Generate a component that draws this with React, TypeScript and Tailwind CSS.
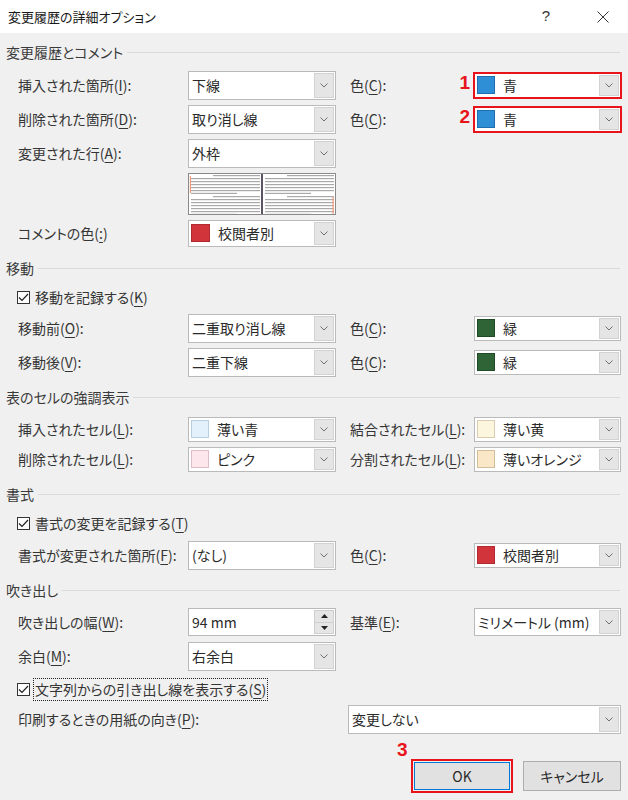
import React from "react";

const U = ({ children }: { children: React.ReactNode }) => (
  <span className="underline underline-offset-[3px] decoration-1">{children}</span>
);

function Chevron() {
  return (
    <svg width="8" height="5" viewBox="0 0 8 5">
      <path d="M0.5 0.5 L4 4 L7.5 0.5" fill="none" stroke="#707070" strokeWidth="1" />
    </svg>
  );
}

function ArrowBtn() {
  return (
    <div className="w-[20px] my-px mr-px shrink-0 bg-[#e5e5e5] border border-[#d2d2d2] flex items-center justify-center">
      <Chevron />
    </div>
  );
}

function Combo({ cls, children }: { cls: string; children: React.ReactNode }) {
  return (
    <div className={`flex shrink-0 bg-white border border-[#bababa] ${cls}`}>
      <div className="flex-1 flex items-center pl-[3px] min-w-0 text-[14px] text-[#2a2a2a] whitespace-nowrap">
        {children}
      </div>
      <ArrowBtn />
    </div>
  );
}

function ColorCombo({ cls, sw, text, noBorder }: { cls: string; sw: string; text: string; noBorder?: boolean }) {
  return (
    <div className={`flex shrink-0 bg-white ${noBorder ? "border border-transparent" : "border border-[#bababa]"} ${cls}`}>
      <div className="flex-1 flex items-center pl-[2px] min-w-0 text-[14px] text-[#2a2a2a] whitespace-nowrap">
        <span className={`w-[18px] h-[18px] border shrink-0 ${sw}`} />
        <span className="ml-[8px]">{text}</span>
      </div>
      <ArrowBtn />
    </div>
  );
}

function Section({ title }: { title: string }) {
  return (
    <div className="flex items-center h-[20px] pl-[6px] pr-[8px]">
      <span className="text-[14px] text-[#3a3a3a] whitespace-nowrap">{title}</span>
      <div className="flex-1 h-px bg-[#dadada] ml-[4px]" />
    </div>
  );
}

function Check({ children, focus }: { children: React.ReactNode; focus?: boolean }) {
  return (
    <div className="flex items-center h-[26px] pl-[17px]">
      <div className="w-[13px] h-[13px] bg-white border border-[#333] flex items-center justify-center shrink-0">
        <svg width="11" height="9" viewBox="0 0 11 9">
          <path d="M1 4.5 L4 7.5 L10 1" fill="none" stroke="#222" strokeWidth="1.2" />
        </svg>
      </div>
      <span
        className={`ml-[3px] text-[14px] text-[#353535] whitespace-nowrap px-px ${
          focus ? "border border-dotted border-[#222]" : "border border-transparent"
        }`}
      >
        {children}
      </span>
    </div>
  );
}

function Label({ children, cls }: { children: React.ReactNode; cls: string }) {
  return <div className={`text-[14px] text-[#353535] whitespace-nowrap shrink-0 ${cls}`}>{children}</div>;
}

function Preview() {
  const lines = (ox: number) => {
    const out: React.ReactNode[] = [];
    const groups = [0, 21];
    groups.forEach((g, gi) => {
      out.push(<rect key={`h${gi}`} x={ox + 24} y={g + 1} width={47} height={1.2} fill="#a9a9a9" />);
      [4, 7, 10, 13, 16].forEach((y, i) =>
        out.push(<rect key={`f${gi}${i}`} x={ox + 2} y={g + y} width={69} height={1.2} fill="#a9a9a9" />)
      );
      out.push(<rect key={`s${gi}`} x={ox + 2} y={g + 18.8} width={46} height={1.2} fill="#a9a9a9" />);
    });
    return out;
  };
  return (
    <div className="ml-[188px] mt-[3px] w-[148px] h-[42px] border border-[#8a8a8a] bg-white">
      <svg width="146" height="40" viewBox="0 0 146 40">
        {lines(0)}
        {lines(74)}
        <rect x={72} y={0} width={2} height={40} fill="#5c5664" />
        <rect x={0.8} y={2} width={1.2} height={17} fill="#f39a7c" />
        <rect x={143.5} y={23} width={1.2} height={17} fill="#f39a7c" />
      </svg>
    </div>
  );
}

function Annot({ n }: { n: string }) {
  return (
    <span className="absolute right-full mr-[4px] top-[0px] font-['Liberation_Sans',Arial,sans-serif] font-bold text-[19px] leading-none text-[#e8141b]">
      {n}
    </span>
  );
}

function RedColor({ n }: { n: string }) {
  return (
    <div className="relative">
      <Annot n={n} />
      <div className="absolute -inset-[1px] border-2 border-[#e8141b] pointer-events-none z-10" />
      <ColorCombo cls="w-[147px] h-[25px]" sw="bg-[#2f8fd6] border-[#1e6eb0]" text="青" noBorder />
    </div>
  );
}

export default function App() {
  return (
    <div className="w-[628px] h-[800px] bg-[#f0f0f0] overflow-hidden font-['Noto_Sans_CJK_JP',sans-serif] [font-feature-settings:'palt'] text-[#2b2b2b]">
      {/* Title bar */}
      <div className="h-[33px] bg-white flex items-center">
        <span className="pl-[8px] text-[13px] text-[#1a1a1a]">変更履歴の詳細オプション</span>
        <span className="ml-auto text-[15px] text-[#333] font-['Liberation_Sans',sans-serif]">?</span>
        <svg className="ml-[47px] mr-[19px]" width="12" height="12" viewBox="0 0 12 12">
          <path d="M0.5 0.5 L11.5 11.5 M11.5 0.5 L0.5 11.5" stroke="#333" strokeWidth="1" />
        </svg>
      </div>

      {/* 変更履歴とコメント */}
      <div className="mt-[9px]">
        <Section title="変更履歴とコメント" />
      </div>
      <div className="mt-[6px] flex items-center h-[34px] pl-[18px]">
        <Label cls="w-[170px]">
          挿入された箇所(<U>I</U>):
        </Label>
        <Combo cls="w-[148px] h-[29px]">下線</Combo>
        <Label cls="w-[124px] ml-[14px]">
          色(<U>C</U>):
        </Label>
        <RedColor n="1" />
      </div>
      <div className="flex items-center h-[34px] pl-[18px]">
        <Label cls="w-[170px]">
          削除された箇所(<U>D</U>):
        </Label>
        <Combo cls="w-[148px] h-[29px]">取り消し線</Combo>
        <Label cls="w-[124px] ml-[14px]">
          色(<U>C</U>):
        </Label>
        <RedColor n="2" />
      </div>
      <div className="flex items-center h-[34px] pl-[18px]">
        <Label cls="w-[170px]">
          変更された行(<U>A</U>):
        </Label>
        <Combo cls="w-[148px] h-[29px]">外枠</Combo>
      </div>
      <Preview />
      <div className="mt-[1px] flex items-center h-[34px] pl-[18px]">
        <Label cls="w-[170px]">
          コメントの色(<U>:</U>)
        </Label>
        <ColorCombo cls="w-[148px] h-[27px]" sw="w-[19px] bg-[#d1343a] border-[#b02a30]" text="校閲者別" />
      </div>

      {/* 移動 */}
      <div className="mt-[8px]">
        <Section title="移動" />
      </div>
      <div className="mt-[6px]">
        <Check>
          移動を記録する(<U>K</U>)
        </Check>
      </div>
      <div className="mt-[1px] flex items-center h-[34px] pl-[18px]">
        <Label cls="w-[170px]">
          移動前(<U>O</U>):
        </Label>
        <Combo cls="w-[148px] h-[29px]">二重取り消し線</Combo>
        <Label cls="w-[124px] ml-[14px]">
          色(<U>C</U>):
        </Label>
        <ColorCombo cls="w-[147px] h-[25px]" sw="bg-[#2e6436] border-[#1f4a26]" text="緑" />
      </div>
      <div className="flex items-center h-[34px] pl-[18px]">
        <Label cls="w-[170px]">
          移動後(<U>V</U>):
        </Label>
        <Combo cls="w-[148px] h-[29px]">二重下線</Combo>
        <Label cls="w-[124px] ml-[14px]">
          色(<U>C</U>):
        </Label>
        <ColorCombo cls="w-[147px] h-[25px]" sw="bg-[#2e6436] border-[#1f4a26]" text="緑" />
      </div>

      {/* 表のセルの強調表示 */}
      <div className="mt-[8px]">
        <Section title="表のセルの強調表示" />
      </div>
      <div className="mt-[7px] flex items-center h-[30px] pl-[18px]">
        <Label cls="w-[170px]">
          挿入されたセル(<U>L</U>):
        </Label>
        <ColorCombo cls="w-[148px] h-[25px]" sw="bg-[#e2f1fc] border-[#b9cfe0]" text="薄い青" />
        <Label cls="w-[124px] ml-[14px]">
          結合されたセル(<U>L</U>):
        </Label>
        <ColorCombo cls="w-[147px] h-[25px]" sw="bg-[#fdf6df] border-[#d9ccb0]" text="薄い黄" />
      </div>
      <div className="flex items-center h-[30px] pl-[18px]">
        <Label cls="w-[170px]">
          削除されたセル(<U>L</U>):
        </Label>
        <ColorCombo cls="w-[148px] h-[25px]" sw="bg-[#fde6ec] border-[#e0bcc6]" text="ピンク" />
        <Label cls="w-[124px] ml-[14px]">
          分割されたセル(<U>L</U>):
        </Label>
        <ColorCombo cls="w-[147px] h-[25px]" sw="bg-[#f9e7c8] border-[#d2bd98]" text="薄いオレンジ" />
      </div>

      {/* 書式 */}
      <div className="mt-[10px]">
        <Section title="書式" />
      </div>
      <div className="mt-[6px]">
        <Check>
          書式の変更を記録する(<U>T</U>)
        </Check>
      </div>
      <div className="mt-[2px] flex items-center h-[34px] pl-[18px]">
        <Label cls="w-[170px]">
          書式が変更された箇所(<U>F</U>):
        </Label>
        <Combo cls="w-[148px] h-[29px]">(なし)</Combo>
        <Label cls="w-[124px] ml-[14px]">
          色(<U>C</U>):
        </Label>
        <ColorCombo cls="w-[147px] h-[25px]" sw="bg-[#d1343a] border-[#b02a30]" text="校閲者別" />
      </div>

      {/* 吹き出し */}
      <div className="mt-[8px]">
        <Section title="吹き出し" />
      </div>
      <div className="mt-[5px] flex items-center h-[34px] pl-[18px]">
        <Label cls="w-[170px]">
          吹き出しの幅(<U>W</U>):
        </Label>
        <div className="flex shrink-0 bg-white border border-[#bababa] w-[148px] h-[28px]">
          <div className="flex-1 flex items-center pl-[3px] text-[14px] text-[#2a2a2a]">94 mm</div>
          <div className="flex flex-col w-[20px] my-px mr-px">
            <div className="flex-1 bg-[#e5e5e5] border border-[#cfcfcf] flex items-center justify-center">
              <svg width="7" height="4" viewBox="0 0 7 4">
                <path d="M0 4 L3.5 0 L7 4Z" fill="#222" />
              </svg>
            </div>
            <div className="flex-1 bg-[#e5e5e5] border border-t-0 border-[#cfcfcf] flex items-center justify-center">
              <svg width="7" height="4" viewBox="0 0 7 4">
                <path d="M0 0 L3.5 4 L7 0Z" fill="#222" />
              </svg>
            </div>
          </div>
        </div>
        <Label cls="w-[124px] ml-[14px]">
          基準(<U>E</U>):
        </Label>
        <Combo cls="w-[147px] h-[28px]">ミリメートル (mm)</Combo>
      </div>
      <div className="flex items-center h-[34px] pl-[18px]">
        <Label cls="w-[170px]">
          余白(<U>M</U>):
        </Label>
        <Combo cls="w-[148px] h-[29px]">右余白</Combo>
      </div>
      <div className="mt-[3px]">
        <Check focus>
          文字列からの引き出し線を表示する(<U>S</U>)
        </Check>
      </div>
      <div className="flex items-center h-[34px] pl-[18px]">
        <Label cls="w-[330px]">
          印刷するときの用紙の向き(<U>P</U>):
        </Label>
        <Combo cls="w-[273px] h-[29px]">変更しない</Combo>
      </div>

      {/* Buttons */}
      <div className="mt-[23px] flex items-center justify-end pr-[7px] gap-[10px]">
        <div className="relative border-2 border-[#e8141b] p-px">
          <span className="absolute left-[-16px] top-[-21px] font-['Liberation_Sans',Arial,sans-serif] font-bold text-[19px] leading-none text-[#e8141b]">
            3
          </span>
          <div className="w-[96px] h-[28px] bg-[#e1e1e1] border border-[#0078d7] flex items-center justify-center text-[14px] text-[#2a2a2a]">
            OK
          </div>
        </div>
        <div className="w-[98px] h-[30px] bg-[#e1e1e1] border border-[#adadad] flex items-center justify-center text-[14px] text-[#2a2a2a]">
          キャンセル
        </div>
      </div>
    </div>
  );
}
